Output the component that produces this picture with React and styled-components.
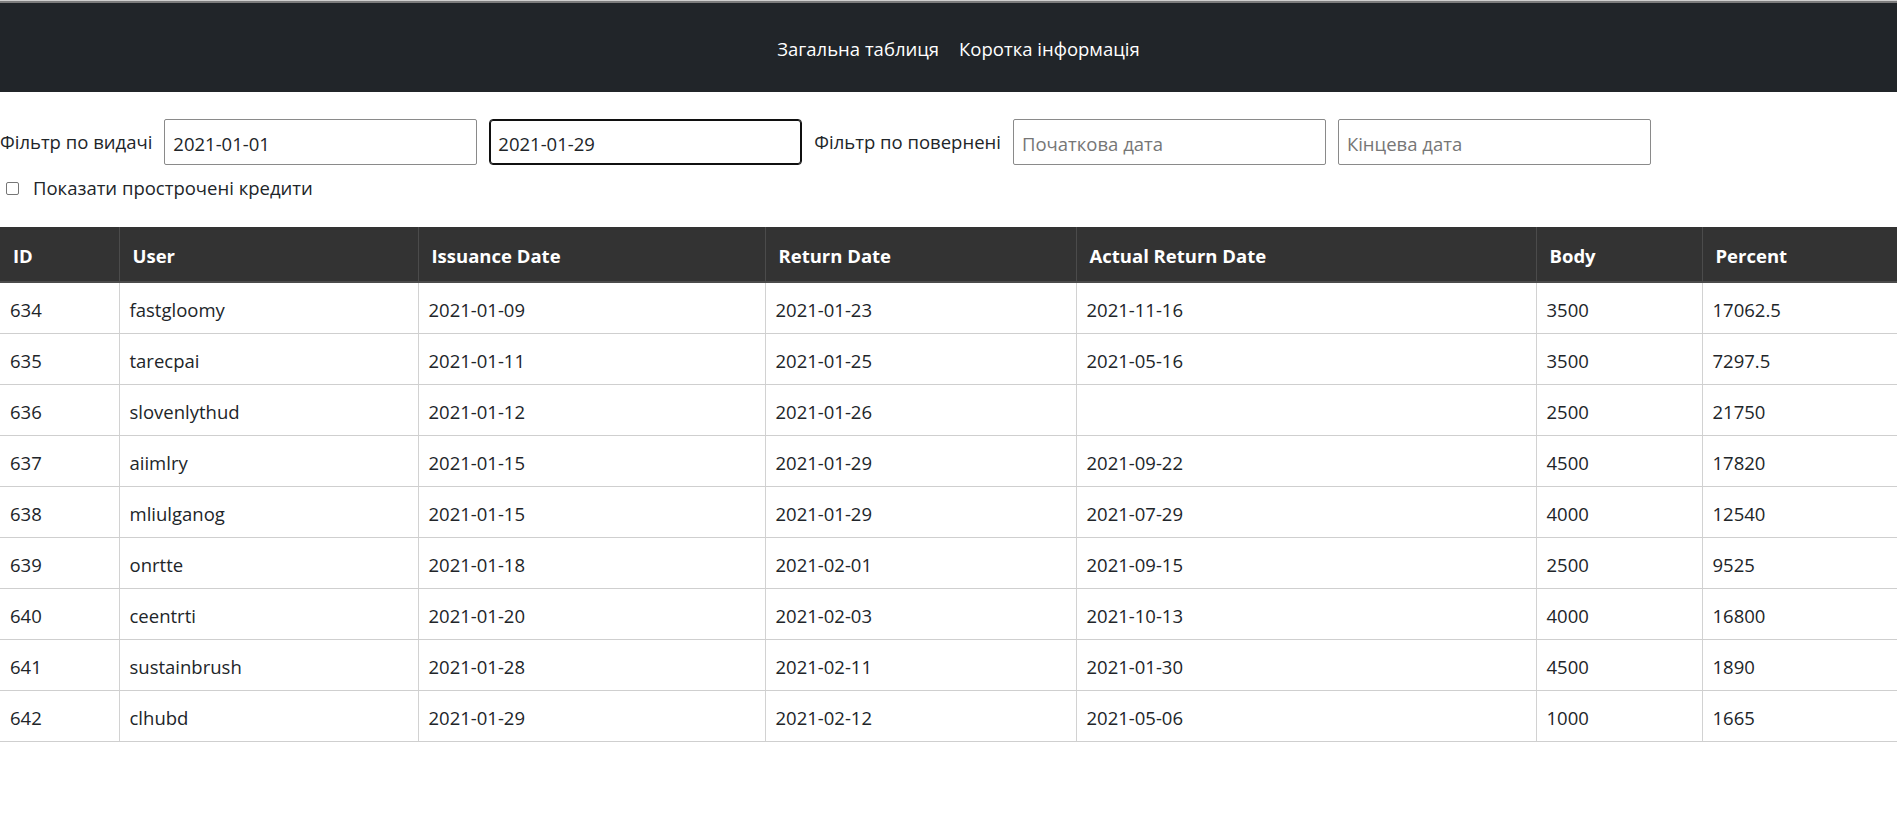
import React from "react";
import styled, { createGlobalStyle } from "styled-components";

const Global = createGlobalStyle`
  html, body { margin: 0; padding: 0; background: #fff; }
  body {
    font-family: "Open Sans", "Noto Sans", sans-serif;
    font-size: 18.5px;
    color: #212529;
  }
  * { box-sizing: border-box; }
`;

const TopLine = styled.div`
  height: 3px;
  border-top: 1px solid #cfcfcf;
  background: #7d7d7d;
`;

const Navbar = styled.nav`
  height: 89px;
  padding-top: 2px;
  background: #212529;
  display: flex;
  align-items: center;
  justify-content: center;
`;

const NavLink = styled.a`
  color: #fff;
  text-decoration: none;
  font-size: 18.5px;
  margin-left: 20px;
  cursor: pointer;
`;

const Filters = styled.div`
  padding: 27px 0 0 0;
`;

const FilterRow = styled.div`
  display: flex;
  align-items: center;
  gap: 12px;
`;

const Label = styled.label`
  font-size: 18.5px;
  line-height: 30px;
  white-space: nowrap;
`;

const Input = styled.input`
  width: 313px;
  height: 46px;
  padding: 2px 8px 0;
  font-family: inherit;
  font-size: 18.5px;
  color: #212529;
  border: 1px solid ${(p) => (p.$focused ? "#101010" : "#8a8a8a")};
  border-radius: ${(p) => (p.$focused ? "4px" : "2px")};
  box-shadow: ${(p) => (p.$focused ? "inset 0 0 0 1px #101010" : "none")};
  outline: none;
  background: #fff;
  &::placeholder { color: #767676; }
`;

const CheckRow = styled.label`
  display: flex;
  align-items: center;
  gap: 14px;
  margin-top: 8px;
  padding-left: 6px;
  font-size: 18.5px;
  line-height: 30px;
`;

const CheckBox = styled.span`
  width: 13px;
  height: 13px;
  border: 1px solid #767676;
  border-radius: 2px;
  background: #fff;
`;

const Table = styled.table`
  margin-top: 24px;
  width: 100%;
  border-collapse: collapse;
  table-layout: fixed;
  font-size: 18.5px;
`;

const Th = styled.th`
  background: #333333;
  color: #fff;
  font-weight: 700;
  text-align: left;
  padding: 14px 10px 10px 13px;
  line-height: 30px;
  border-left: 1px solid #4b4b4b;
  border-bottom: 2px solid #4b4b4b;
  &:first-child { border-left: none; }
`;

const Td = styled.td`
  padding: 12px 10px 8px;
  line-height: 30px;
  height: 51px;
  border-left: 1px solid #d2d2d2;
  border-bottom: 1px solid #cfcfcf;
  white-space: nowrap;
  &:first-child { border-left: none; }
`;

const columns = [
  { title: "ID", w: 119 },
  { title: "User", w: 299 },
  { title: "Issuance Date", w: 347 },
  { title: "Return Date", w: 311 },
  { title: "Actual Return Date", w: 460 },
  { title: "Body", w: 166 },
  { title: "Percent", w: null },
];

const rows = [
  ["634", "fastgloomy", "2021-01-09", "2021-01-23", "2021-11-16", "3500", "17062.5"],
  ["635", "tarecpai", "2021-01-11", "2021-01-25", "2021-05-16", "3500", "7297.5"],
  ["636", "slovenlythud", "2021-01-12", "2021-01-26", "", "2500", "21750"],
  ["637", "aiimlry", "2021-01-15", "2021-01-29", "2021-09-22", "4500", "17820"],
  ["638", "mliulganog", "2021-01-15", "2021-01-29", "2021-07-29", "4000", "12540"],
  ["639", "onrtte", "2021-01-18", "2021-02-01", "2021-09-15", "2500", "9525"],
  ["640", "ceentrti", "2021-01-20", "2021-02-03", "2021-10-13", "4000", "16800"],
  ["641", "sustainbrush", "2021-01-28", "2021-02-11", "2021-01-30", "4500", "1890"],
  ["642", "clhubd", "2021-01-29", "2021-02-12", "2021-05-06", "1000", "1665"],
];

export default function App() {
  return (
    <>
      <Global />
      <TopLine />
      <Navbar>
        <NavLink>Загальна таблиця</NavLink>
        <NavLink>Коротка інформація</NavLink>
      </Navbar>
      <Filters>
        <FilterRow>
          <Label>Фільтр по видачі</Label>
          <Input defaultValue="2021-01-01" />
          <Input defaultValue="2021-01-29" $focused />
          <Label>Фільтр по повернені</Label>
          <Input placeholder="Початкова дата" />
          <Input placeholder="Кінцева дата" />
        </FilterRow>
        <CheckRow>
          <CheckBox />
          Показати прострочені кредити
        </CheckRow>
      </Filters>
      <Table>
        <colgroup>
          {columns.map((c, i) => (
            <col key={i} style={c.w ? { width: c.w } : undefined} />
          ))}
        </colgroup>
        <thead>
          <tr>
            {columns.map((c) => (
              <Th key={c.title}>{c.title}</Th>
            ))}
          </tr>
        </thead>
        <tbody>
          {rows.map((r) => (
            <tr key={r[0]}>
              {r.map((v, i) => (
                <Td key={i}>{v}</Td>
              ))}
            </tr>
          ))}
        </tbody>
      </Table>
    </>
  );
}
